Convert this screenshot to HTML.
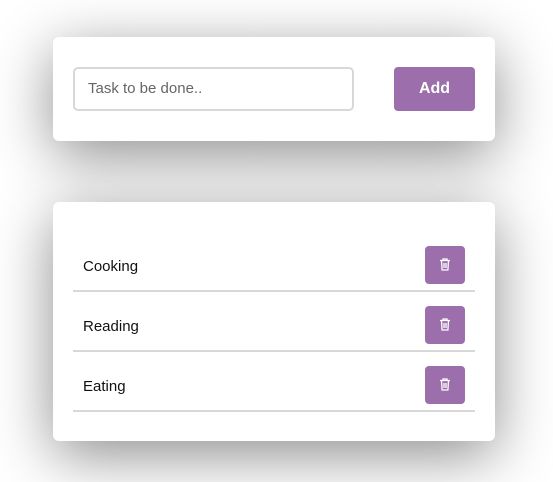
<!DOCTYPE html>
<html><head><style>
body{margin:0;width:553px;height:482px;background:#fff;font-family:"Liberation Sans",sans-serif;position:relative;overflow:hidden}
.card{position:absolute;left:53px;width:442px;background:#fff;border-radius:6px;box-shadow:0 14px 60px rgba(0,0,0,.45)}
.c1{top:37px;height:104px}
.c2{top:202px;height:239px}
.inp{position:absolute;left:20px;top:30px;height:40px;border:2px solid #d8d8d8;border-radius:5px;font-size:15px;color:#666;line-height:40px;padding-left:13px;width:264px}
.add{position:absolute;left:341px;top:30px;width:81px;height:44px;background:#9c6eab;border-radius:4px;color:#fff;font-weight:bold;font-size:16px;text-align:center;line-height:44px}
.row{position:absolute;left:20px;width:402px;height:58px;border-bottom:2px solid #d8d8d8}
.row span{position:absolute;left:10px;top:26px;font-size:15px;color:#111}
.del{position:absolute;left:352px;top:14px;width:40px;height:38px;background:#9c6eab;border-radius:4px}
.del svg{position:absolute;left:14px;top:12px}
</style></head><body>
<div class="card c1"><div class="inp">Task to be done..</div><div class="add">Add</div></div>
<div class="card c2">
<div class="row" style="top:30px"><span>Cooking</span><div class="del"><svg width="12" height="13" viewBox="0 0 12 13" fill="none" stroke="#fff" stroke-width="1.3"><path d="M1 2.5h10M4 2.5V1h4v1.5M2.5 2.5l.6 9.5h5.8l.6-9.5M5 5v5M7 5v5"/></svg></div></div>
<div class="row" style="top:90px"><span>Reading</span><div class="del"><svg width="12" height="13" viewBox="0 0 12 13" fill="none" stroke="#fff" stroke-width="1.3"><path d="M1 2.5h10M4 2.5V1h4v1.5M2.5 2.5l.6 9.5h5.8l.6-9.5M5 5v5M7 5v5"/></svg></div></div>
<div class="row" style="top:150px"><span>Eating</span><div class="del"><svg width="12" height="13" viewBox="0 0 12 13" fill="none" stroke="#fff" stroke-width="1.3"><path d="M1 2.5h10M4 2.5V1h4v1.5M2.5 2.5l.6 9.5h5.8l.6-9.5M5 5v5M7 5v5"/></svg></div></div>
</div>
</body></html>
